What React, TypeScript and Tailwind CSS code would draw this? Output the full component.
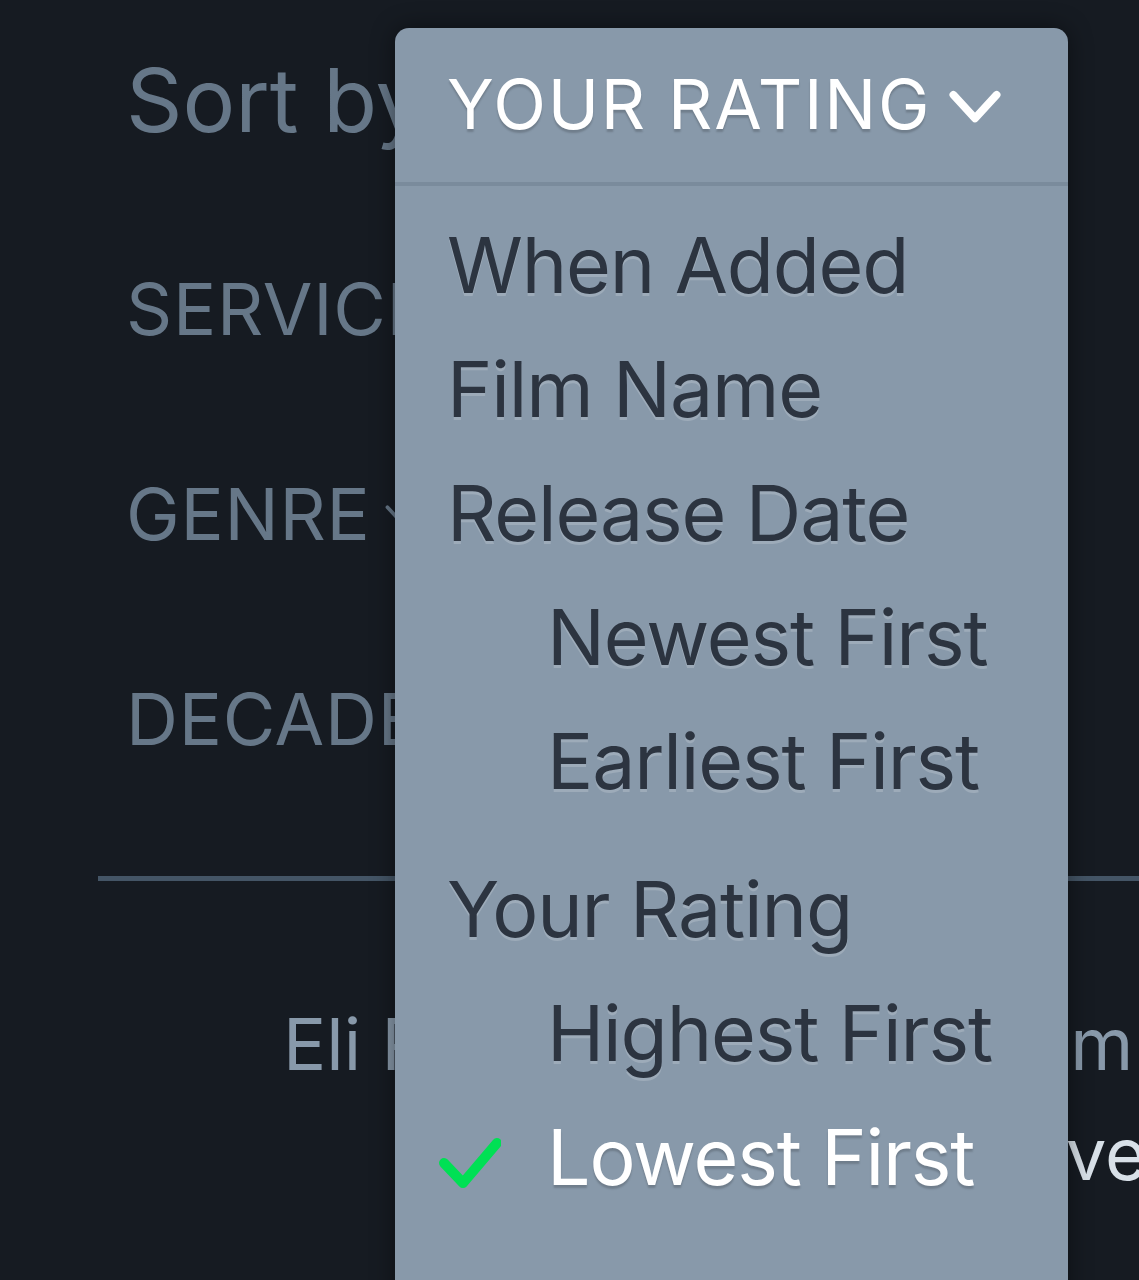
const menuItem = "block h-[124px] leading-[124px] text-[77px] tracking-[-0.015em] whitespace-nowrap [text-shadow:0_3px_0_rgba(255,255,255,0.18)]"
const filterLabel = "flex items-center h-[205px] text-[72px] tracking-[0.01em]"

const Chevron = ({ color, size, stroke }: { color: string; size: number; stroke: number }) => (
  <svg width={size} height={size * 0.7} viewBox="0 0 56 40">
    <polyline points="6,8 28,32 50,8" fill="none" stroke={color} strokeWidth={stroke} strokeLinecap="round" strokeLinejoin="round" />
  </svg>
)

const Check = () => (
  <svg width="62" height="54" viewBox="0 0 62 54" className="absolute left-[-8px] top-[42px]">
    <polyline points="5,26 24,46 58,6" fill="none" stroke="#00e054" strokeWidth="10" strokeLinecap="round" strokeLinejoin="round" />
  </svg>
)

const SortMenu = () => {
  return (
    <div className="absolute left-[395px] top-[28px] w-[673px] h-[1300px] rounded-[14px] bg-[#8899aa] shadow-[0_0_24px_rgba(0,0,0,0.45)]">
      <div className="flex items-center h-[158px] pl-[52px] border-b-[4px] border-[#7a8b9c] text-white">
        <span className="text-[69px] tracking-[0.025em] whitespace-nowrap [text-shadow:0_3px_2px_rgba(0,0,0,0.18)]">
          YOUR RATING
        </span>
        <div className="ml-[16px] mt-[4px]">
          <Chevron color="white" size={56} stroke={8} />
        </div>
      </div>
      <ul className="pt-[17px] pl-[52px] text-[#2c3440]">
        <li className={menuItem}>When Added</li>
        <li className={menuItem}>Film Name</li>
        <li className={menuItem}>Release Date</li>
        <li className={menuItem + " pl-[100px]"}>Newest First</li>
        <li className={menuItem + " pl-[100px]"}>Earliest First</li>
        <li className={menuItem + " mt-[24px]"}>Your Rating</li>
        <li className={menuItem + " pl-[100px]"}>Highest First</li>
        <li className={menuItem + " pl-[100px] relative text-white [text-shadow:0_3px_2px_rgba(0,0,0,0.18)]"}>
          <Check />
          Lowest First
        </li>
      </ul>
    </div>
  )
}

const App = () => {
  return (
    <div className="relative w-[1139px] h-[1280px] overflow-hidden bg-[#161b22] font-['Inter','Liberation_Sans',sans-serif]">
      <div className="pl-[126px] text-[#678]">
        <div className="h-[200px] leading-[200px] text-[88px]">Sort by</div>
        <div className={filterLabel + " mt-[6px]"}>
          SERVICE
          <span className="ml-[14px]"><Chevron color="#678" size={30} stroke={7} /></span>
        </div>
        <div className={filterLabel}>
          GENRE
          <span className="ml-[14px]"><Chevron color="#678" size={30} stroke={7} /></span>
        </div>
        <div className={filterLabel}>
          DECADE
          <span className="ml-[14px]"><Chevron color="#678" size={30} stroke={7} /></span>
        </div>
      </div>
      <div className="ml-[98px] mt-[55px] h-[5px] bg-[#456]" />
      <div className="mt-[113px] text-[72px] whitespace-nowrap">
        <p className="h-[110px] leading-[100px] pl-[283px] text-[#8899aa]">Eli Roth&apos;s new horror film</p>
        <p className="h-[110px] leading-[100px] mr-[-8px] text-right text-[#d8e0e8]">Holiday slasher fave</p>
      </div>
      <SortMenu />
    </div>
  )
}

export default App
